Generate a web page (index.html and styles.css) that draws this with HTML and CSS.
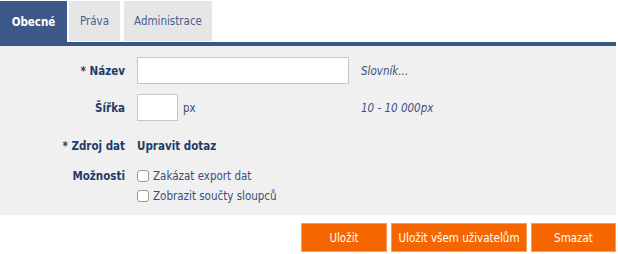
FILE: index.html
```html
<!DOCTYPE html>
<html lang="cs">
<head>
<meta charset="utf-8">
<title>Obecné</title>
<link rel="stylesheet" href="styles.css">
</head>
<body>
<div class="page">
  <div class="tabs">
    <div class="tab active">Obecné</div>
    <div class="tab t-prava">Práva</div>
    <div class="tab t-admin">Administrace</div>
  </div>
  <div class="bar"></div>
  <div class="panel">
    <div class="row r1">
      <div class="label">* Název</div>
      <div class="field"><span class="input wide"></span></div>
      <div class="hint">Slovník...</div>
    </div>
    <div class="row r2">
      <div class="label">Šířka</div>
      <div class="field"><span class="input narrow"></span><span class="unit">px</span></div>
      <div class="hint">10 - 10 000px</div>
    </div>
    <div class="row r3">
      <div class="label">* Zdroj dat</div>
      <div class="field"><span class="link">Upravit dotaz</span></div>
    </div>
    <div class="row r4">
      <div class="label">Možnosti</div>
      <div class="field checks">
        <div class="check"><span class="box"></span><span>Zakázat export dat</span></div>
        <div class="check"><span class="box"></span><span>Zobrazit součty sloupců</span></div>
      </div>
    </div>
  </div>
  <div class="actions">
    <div class="btn b1">Uložit</div>
    <div class="btn b2">Uložit všem uživatelům</div>
    <div class="btn b3">Smazat</div>
  </div>
</div>
</body>
</html>
```
FILE: styles.css
```css
html, body {
  margin: 0;
  padding: 0;
  background: #ffffff;
}
body {
  font-family: "DejaVu Sans Condensed", "DejaVu Sans", sans-serif;
  font-size: 11.5px;
  color: #3a4d7a;
}
.page {
  width: 616px;
}
.tabs {
  display: flex;
  height: 42px;
  padding-top: 1px;
  box-sizing: border-box;
}
.tab {
  display: flex;
  align-items: center;
  justify-content: center;
  background: #e6e6e6;
  color: #4a5f8c;
  height: 40px;
  box-sizing: border-box;
}
.tab.active {
  width: 67px;
  height: 41px;
  background: #3c5889;
  color: #ffffff;
  font-weight: bold;
  margin-right: 2px;
}
.t-prava {
  width: 51px;
  margin-right: 4px;
}
.t-admin {
  width: 88px;
}
.bar {
  height: 4px;
  background: #3a5685;
}
.panel {
  background: #f0f0f0;
  height: 169px;
  padding-top: 11px;
  box-sizing: border-box;
}
.row {
  display: grid;
  grid-template-columns: 125px 212px 1fr;
  column-gap: 12px;
  align-items: center;
}
.label {
  text-align: right;
  font-weight: bold;
  color: #223a68;
}
.field {
  display: flex;
  align-items: center;
}
.input {
  display: block;
  background: #ffffff;
  border: 1px solid #c6c6c6;
  box-sizing: border-box;
  height: 27px;
}
.wide {
  width: 212px;
}
.narrow {
  width: 41px;
}
.unit {
  margin-left: 5px;
  color: #3a4d7a;
}
.hint {
  font-style: italic;
  color: #3a5080;
}
.r1 {
  height: 27px;
}
.r2 {
  height: 27px;
  margin-top: 10px;
}
.r3 {
  height: 16px;
  margin-top: 17px;
}
.link {
  font-weight: bold;
  color: #223a68;
}
.r4 {
  margin-top: 12px;
  align-items: start;
}
.r4 .label {
  line-height: 20px;
}
.checks {
  flex-direction: column;
  align-items: flex-start;
  grid-column: 2 / 4;
}
.check {
  display: flex;
  align-items: center;
  height: 20px;
}
.box {
  width: 12px;
  height: 12px;
  border: 1px solid #9a9a9a;
  border-radius: 3px;
  background: #ffffff;
  box-sizing: border-box;
  margin-right: 4px;
}
.actions {
  display: flex;
  justify-content: flex-end;
  gap: 4px;
  margin-top: 8px;
}
.btn {
  height: 29px;
  box-sizing: border-box;
  background: #f56600;
  border: 1px solid #fb9b58;
  color: #ffffff;
  display: flex;
  align-items: center;
  justify-content: center;
}
.b1 { width: 86px; }
.b2 { width: 136px; }
.b3 { width: 85px; }
```
